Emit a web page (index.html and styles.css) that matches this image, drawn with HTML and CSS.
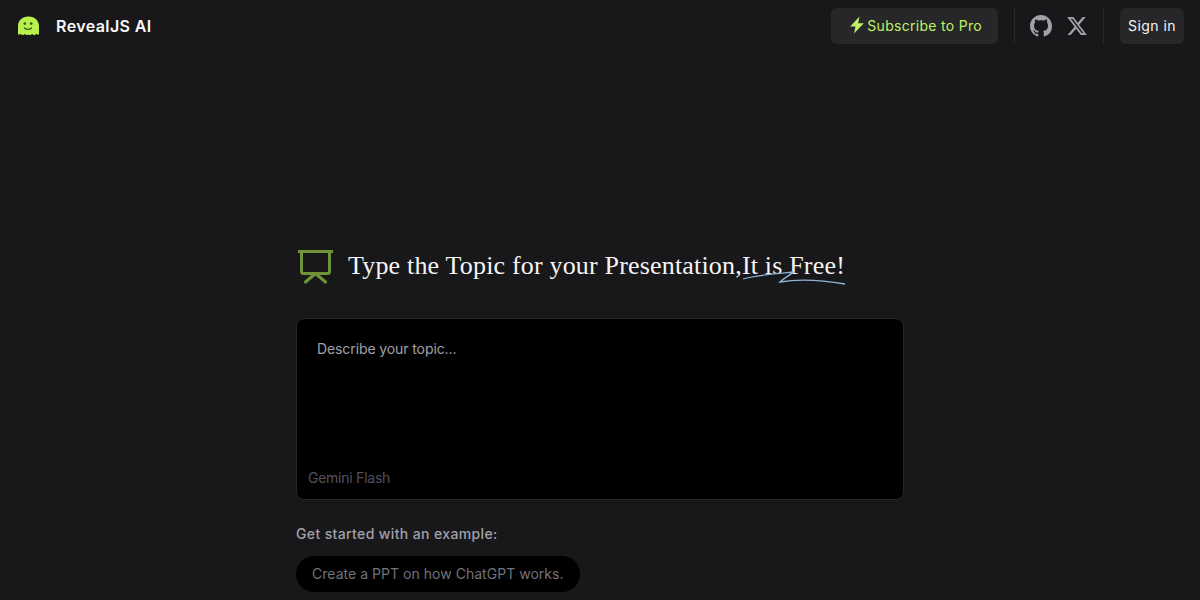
FILE: index.html
```html
<!DOCTYPE html>
<html lang="en">
<head>
    <meta charset="UTF-8">
    <meta name="viewport" content="width=device-width, initial-scale=1.0">
    <title>RevealJS AI</title>
    <link rel="stylesheet" href="styles.css">
</head>
<body>
    <header class="topbar">
        <div class="brand">
            <svg class="brand-logo" viewBox="0 0 22 22" width="22" height="22">
                <path fill="#b8f04e" d="M11 1.500C5.500 1.500 1 5.500 1 11v7.500c0 1 .8 1.500 1.600 1.100l1.100-.5 1.500.9c.4.2.8.2 1.200 0l1.500-.9 1.500.9c.4.2.800.2 1.200 0l.9-.5.900.5c.4.2.8.2 1.200 0l1.500-.9 1.500.9c.4.2.8.2 1.200 0l1.500-.9 1.100.5c.8.4 1.600-.1 1.600-1.100V11c0-5.500-4.500-9.500-10-9.500z"/>
                <circle cx="7.800" cy="8.600" r="1.300" fill="#3c5212"/>
                <circle cx="14.200" cy="8.600" r="1.300" fill="#3c5212"/>
                <path d="M7.500 13c1.900 1.900 5.100 1.900 7 0" fill="none" stroke="#3c5212" stroke-width="1.300" stroke-linecap="round"/>
            </svg>
            <span class="brand-name">RevealJS AI</span>
        </div>
        <nav class="topnav">
            <a class="btn btn-pro" href="#">
                <svg viewBox="0 0 14 18" width="14" height="18"><path fill="#bef264" d="M9.500 .5 .2 10.500h5.300L4 17.500 13.800 7.200H8.200z"/></svg>
                Subscribe to Pro
            </a>
            <span class="divider"></span>
            <div class="social">
                <a class="icon-link" href="#">
                    <svg viewBox="0 0 16 16" width="22" height="22"><path fill="#a1a1aa" d="M8 0C3.580 0 0 3.580 0 8c0 3.540 2.290 6.530 5.470 7.590.4.070.55-.17.55-.38 0-.19-.01-.82-.01-1.490-2.010.37-2.530-.49-2.690-.94-.09-.23-.48-.94-.82-1.130-.28-.15-.68-.52-.01-.53.63-.01 1.080.58 1.230.82.720 1.210 1.870.870 2.330.660.070-.520.280-.870.510-1.070-1.780-.2-3.640-.89-3.640-3.950 0-.870.310-1.590.820-2.150-.08-.2-.36-1.020.08-2.120 0 0 .670-.210 2.200.820.640-.180 1.320-.270 2-.270s1.360.090 2 .270c1.530-1.040 2.200-.820 2.200-.820.440 1.100.160 1.920.080 2.120.510.560.820 1.270.820 2.150 0 3.070-1.870 3.750-3.650 3.950.290.250.540.730.540 1.480 0 1.070-.010 1.930-.010 2.200 0 .210.150.460.550.380A8.010 8.010 0 0 0 16 8c0-4.420-3.580-8-8-8z"/></svg>
                </a>
                <a class="icon-link" href="#">
                    <svg viewBox="0 0 24 24" width="22" height="22"><path fill="#a1a1aa" d="M18.240 2.250h3.310l-7.230 8.260 8.500 11.240H16.170l-5.210-6.820-5.970 6.820H1.680l7.730-8.840L1.250 2.250H8.080l4.710 6.230zm-1.160 17.520h1.830L7.080 4.130H5.120z"/></svg>
                </a>
            </div>
            <span class="divider"></span>
            <a class="btn btn-signin" href="#">Sign in</a>
        </nav>
    </header>

    <main class="page">
        <section class="card">
            <div class="card-title">
                <svg class="title-icon" viewBox="0 0 38 36" width="38" height="36">
                    <g fill="none" stroke="#6f9337" stroke-width="3">
                        <path d="M1 3.500h35M4.500 3.500v20a2 2 0 0 0 2 2h24a2 2 0 0 0 2-2v-20"/>
                        <path d="M18.500 25.500l-10 8.500M18.500 25.500l10 8.500" stroke-linecap="round"/>
                    </g>
                </svg>
                <h1>Type the Topic for your Presentation,<span class="underlined">It is Free!<svg class="scribble" viewBox="0 0 104 16" width="104" height="16"><path d="M1 9C15 5 30 4 52 2 46 6 41 9 38 12 55 9 80 10 103 14" fill="none" stroke="#8fb4d6" stroke-width="1.300"/></svg></span></h1>
            </div>
            <div class="prompt">
                <div class="placeholder">Describe your topic...</div>
                <div class="model">Gemini Flash</div>
            </div>
            <p class="examples-label">Get started with an example:</p>
            <button class="example">Create a PPT on how ChatGPT works.</button>
        </section>
    </main>
</body>
</html>
```

FILE: styles.css
```css
* {
    box-sizing: border-box;
}
html, body {
    height: 100%;
}
body {
    margin: 0;
    overflow: hidden;
    background-color: #18181b;
    color: #fff;
    font-family: Inter, sans-serif;
}
a {
    text-decoration: none;
}
.topbar {
    display: flex;
    justify-content: space-between;
    align-items: center;
    height: 52px;
    padding: 0 16px 0 17px;
}
.brand {
    display: flex;
    align-items: center;
    gap: 17px;
}
.brand-logo {
    display: block;
}
.brand-name {
    font-size: 16px;
    font-weight: 600;
    letter-spacing: .4px;
    color: #fafafa;
}
.topnav {
    display: flex;
    align-items: center;
    height: 36px;
}
.btn {
    display: flex;
    align-items: center;
    height: 36px;
    padding-bottom: 2px;
    border-radius: 6px;
    background-color: #27272a;
    font-size: 14px;
    font-weight: 400;
    letter-spacing: .3px;
}
.btn-pro {
    gap: 3px;
    padding-left: 19px;
    padding-right: 16px;
    color: #bef264;
}
.btn-signin {
    padding-left: 8px;
    padding-right: 8px;
    letter-spacing: .45px;
    color: #f4f4f5;
}
.divider {
    width: 1px;
    height: 36px;
    margin: 0 16px;
    background-color: #27272a;
}
.social {
    display: flex;
    gap: 14px;
    margin: 0 -1px;
}
.icon-link {
    display: flex;
}
.page {
    width: 672px;
    margin: 0 auto;
    padding-top: 166px;
}
.card {
    padding: 30px 32px 32px;
    border-radius: 12px;
    box-shadow: 0 0 6px rgba(0, 0, 0, .06);
}
.card-title {
    display: flex;
    align-items: center;
    gap: 13px;
    margin: 0 0 34px 1px;
}
.title-icon {
    flex: none;
}
.card-title h1 {
    margin: 0;
    font-family: "Liberation Serif", serif;
    font-size: 26px;
    font-weight: 400;
    letter-spacing: .18px;
    color: #f4f4f5;
}
.underlined {
    position: relative;
}
.scribble {
    position: absolute;
    left: 0;
    bottom: -6px;
}
.prompt {
    display: flex;
    flex-direction: column;
    justify-content: space-between;
    height: 182px;
    padding: 20px 12px 11px 11px;
    border: 1px solid #27272a;
    border-radius: 8px;
    background-color: #000;
}
.placeholder {
    padding-left: 9px;
    font-size: 14px;
    line-height: 20px;
    letter-spacing: -.1px;
    color: #a1a1aa;
}
.model {
    font-size: 14px;
    line-height: 20px;
    letter-spacing: -.25px;
    color: #52525b;
}
.examples-label {
    margin: 24px 0 12px;
    font-size: 14px;
    line-height: 20px;
    font-weight: 500;
    letter-spacing: .37px;
    color: #a1a1aa;
}
.example {
    display: block;
    height: 36px;
    padding: 0 16px 2px;
    border: none;
    border-radius: 18px;
    background-color: #000;
    font-family: Inter, sans-serif;
    font-size: 14px;
    letter-spacing: .03px;
    color: #71717a;
}
```
